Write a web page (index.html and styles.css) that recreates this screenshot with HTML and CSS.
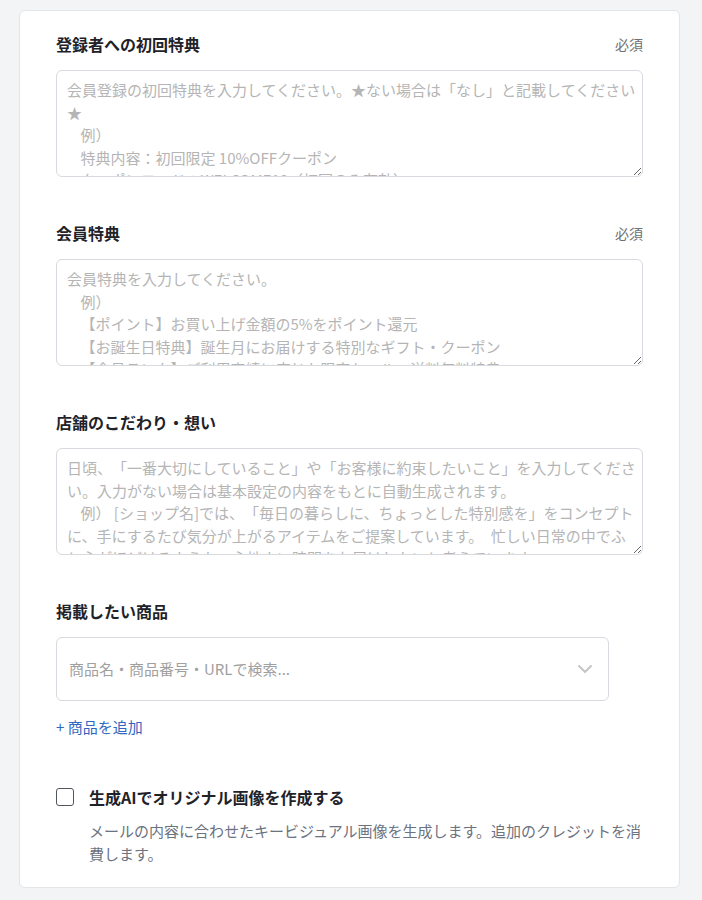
FILE: index.html
```html
<!DOCTYPE html>
<html lang="ja">
<head>
<meta charset="utf-8">
<title>メール作成フォーム</title>
<link rel="stylesheet" href="styles.css">
</head>
<body>
<div class="page">
  <form class="card">
    <div class="field">
      <div class="field-head">
        <label class="field-label" for="first">登録者への初回特典</label>
        <span class="required">必須</span>
      </div>
      <textarea id="first" class="textarea" placeholder="会員登録の初回特典を入力してください。★ない場合は「なし」と記載してください★&#10;    例）&#10;    特典内容：初回限定 10%OFFクーポン&#10;    クーポンコード：WELCOME10（初回のみ有効）"></textarea>
    </div>

    <div class="field">
      <div class="field-head">
        <label class="field-label" for="member">会員特典</label>
        <span class="required">必須</span>
      </div>
      <textarea id="member" class="textarea" placeholder="会員特典を入力してください。&#10;    例）&#10;    【ポイント】お買い上げ金額の5%をポイント還元&#10;    【お誕生日特典】誕生月にお届けする特別なギフト・クーポン&#10;    【会員ランク】ご利用実績に応じた限定セール・送料無料特典"></textarea>
    </div>

    <div class="field">
      <div class="field-head">
        <label class="field-label" for="story">店舗のこだわり・想い</label>
      </div>
      <textarea id="story" class="textarea" placeholder="日頃、「一番大切にしていること」や「お客様に約束したいこと」を入力してください。入力がない場合は基本設定の内容をもとに自動生成されます。&#10;    例） [ショップ名]では、「毎日の暮らしに、ちょっとした特別感を」をコンセプトに、手にするたび気分が上がるアイテムをご提案しています。&#8194;忙しい日常の中でふと心がほどけるような、心地よい時間をお届けしたいと考えています。"></textarea>
    </div>

    <div class="field">
      <div class="field-head">
        <span class="field-label">掲載したい商品</span>
      </div>
      <div class="combobox" role="combobox" aria-expanded="false">
        <span class="combobox-placeholder">商品名・商品番号・URLで検索...</span>
        <svg class="chevron" width="14" height="8" viewBox="0 0 14 8" aria-hidden="true">
          <polyline points="1,1 7,7 13,1" fill="none" stroke="#c6c6c6" stroke-width="2" stroke-linecap="round" stroke-linejoin="round"/>
        </svg>
      </div>
      <a class="add-link" href="#">+ 商品を追加</a>
    </div>

    <div class="ai-option">
      <label class="check-row">
        <input type="checkbox" class="checkbox">
        <span class="check-label">生成AIでオリジナル画像を作成する</span>
      </label>
      <p class="check-desc">メールの内容に合わせたキービジュアル画像を生成します。追加のクレジットを消費します。</p>
    </div>
  </form>
</div>
</body>
</html>
```

FILE: styles.css
```css
* {
  box-sizing: border-box;
}

html, body {
  margin: 0;
  padding: 0;
  background: #f3f4f6;
}

body {
  font-family: "Noto Sans CJK JP", "Noto Sans", sans-serif;
  color: #1f2329;
  text-spacing-trim: space-all;
}

.page {
  padding: 10px 22px 12px 19px;
}

.card {
  display: flex;
  flex-direction: column;
  background: #ffffff;
  border: 1px solid #e3e5e9;
  border-radius: 6px;
  padding: 22px 36px;
}

.field + .field {
  margin-top: 45px;
}

.field-head {
  display: flex;
  justify-content: space-between;
  align-items: center;
  margin-bottom: 15px;
}

.field-label {
  font-size: 16px;
  line-height: 22px;
  font-weight: 700;
  color: #1f2329;
}

.required {
  font-size: 14px;
  line-height: 22px;
  color: #707070;
}

.textarea {
  display: block;
  width: 100%;
  height: 107px;
  margin: 0;
  padding: 8px 5px 8px 10px;
  border: 1px solid #d8dadf;
  border-radius: 6px;
  font-family: "Noto Sans CJK JP", "Noto Sans", sans-serif;
  font-size: 15px;
  line-height: 22.5px;
  color: #1f2329;
  background: #ffffff;
  resize: vertical;
  overflow: hidden;
  text-spacing-trim: space-all;
}

.textarea::placeholder {
  color: #b5b5b5;
  opacity: 1;
  text-spacing-trim: space-all;
}

.combobox {
  display: flex;
  align-items: center;
  justify-content: space-between;
  width: 553px;
  height: 64px;
  padding: 0 16px 0 12px;
  border: 1px solid #d8dadf;
  border-radius: 6px;
  background: #ffffff;
}

.combobox-placeholder {
  font-size: 15px;
  line-height: 22px;
  color: #a0a0a0;
}

.chevron {
  display: block;
}

.add-link {
  display: block;
  margin-top: 15px;
  font-size: 15px;
  line-height: 22px;
  color: #3267c0;
  text-decoration: none;
}

.ai-option {
  margin-top: 48px;
}

.check-row {
  display: flex;
  align-items: center;
  gap: 15px;
  height: 22px;
}

.checkbox {
  appearance: none;
  -webkit-appearance: none;
  width: 18px;
  height: 18px;
  margin: 0;
  border: 1.5px solid #50545c;
  border-radius: 3px;
  background: #ffffff;
  flex: none;
}

.check-label {
  font-size: 16px;
  line-height: 22px;
  font-weight: 700;
  color: #1f2329;
}

.check-desc {
  margin: 12px 0 0;
  padding-left: 33px;
  font-size: 15px;
  line-height: 22.5px;
  color: #6b7280;
}
```
